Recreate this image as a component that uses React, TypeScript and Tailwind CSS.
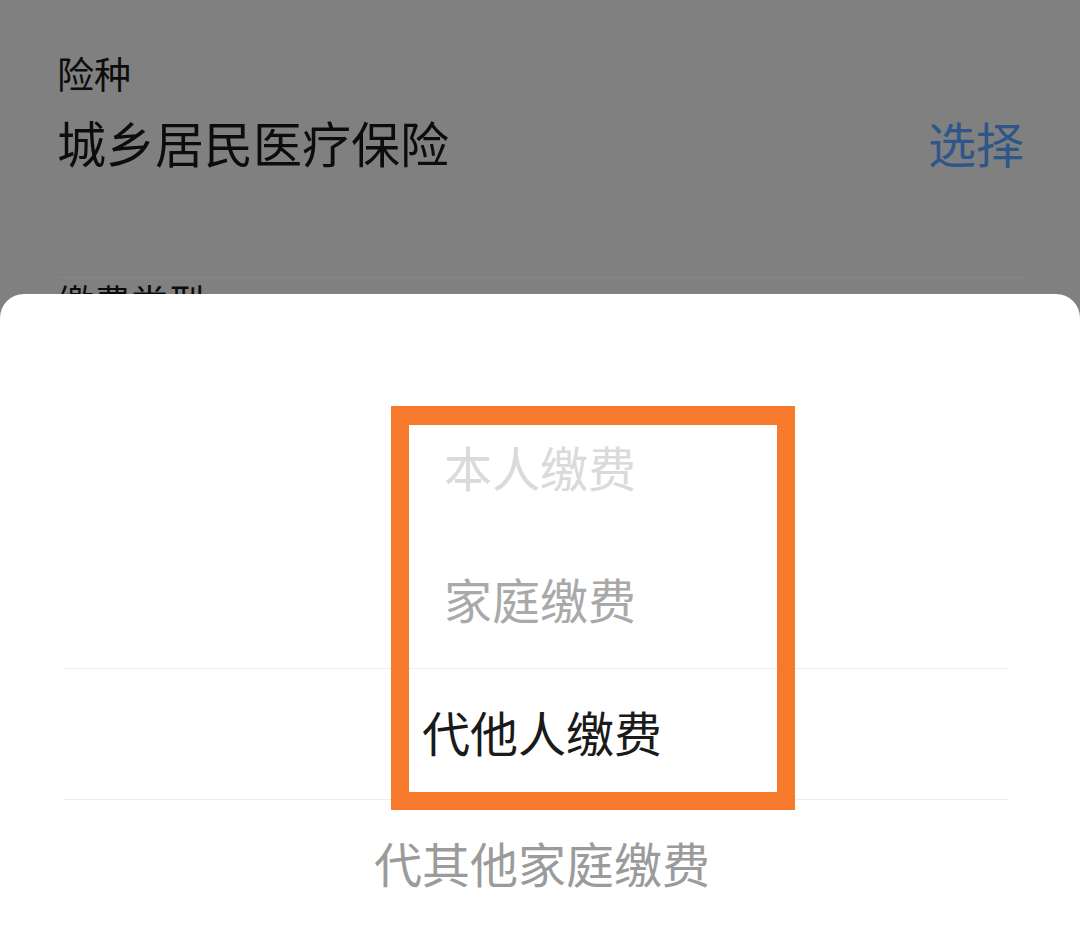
import React from "react";

const font = { fontFamily: '"Noto Sans CJK SC", "Noto Sans", sans-serif' };

export default function App() {
  return (
    <div
      className="relative w-[1080px] h-[939px] overflow-hidden bg-[#808080]"
      style={font}
    >
      {/* dimmed page behind */}
      <div className="flex flex-col pl-[57px] pr-[56px] pt-[55px]">
        <div className="text-[37px] leading-[37px] text-[#0c0c0c]">险种</div>
        <div className="mt-[25px] flex items-center justify-between">
          <div className="text-[49px] leading-[49px] text-[#0c0c0c]">城乡居民医疗保险</div>
          <div className="text-[48px] leading-[48px] text-[#2f5688]">选择</div>
        </div>
        <div className="mt-[111px] h-px bg-[#878787]" />
        <div className="mt-[5px] text-[37px] leading-[37px] text-[#0c0c0c]">缴费类型</div>
      </div>

      {/* bottom sheet */}
      <div className="absolute left-0 right-0 bottom-0 top-[294px] rounded-t-[24px] bg-white">
        <div className="flex flex-col pt-[110px]">
          <div className="flex h-[132px] items-center justify-center pb-[9px] text-[48px] leading-[48px] text-[#dadada]">
            本人缴费
          </div>
          <div className="flex h-[132px] items-center justify-center pb-[8px] text-[48px] leading-[48px] text-[#a9a9a9]">
            家庭缴费
          </div>
          <div className="mx-[64px] mr-[72px] flex h-[132px] items-center justify-center border-y border-[#ececec] pb-[6px] text-[48px] leading-[48px] text-[#1a1a1a]">
            <span className="ml-[12px]">代他人缴费</span>
          </div>
          <div className="flex h-[132px] items-center justify-center pb-[8px] text-[48px] leading-[48px] text-[#9b9b9b]">
            <span className="ml-[4px]">代其他家庭缴费</span>
          </div>
        </div>
      </div>

      {/* orange annotation box */}
      <div className="absolute left-[391px] top-[406px] h-[404px] w-[404px] border-[18px] border-t-[19px] border-[#f7792b]" />
    </div>
  );
}
